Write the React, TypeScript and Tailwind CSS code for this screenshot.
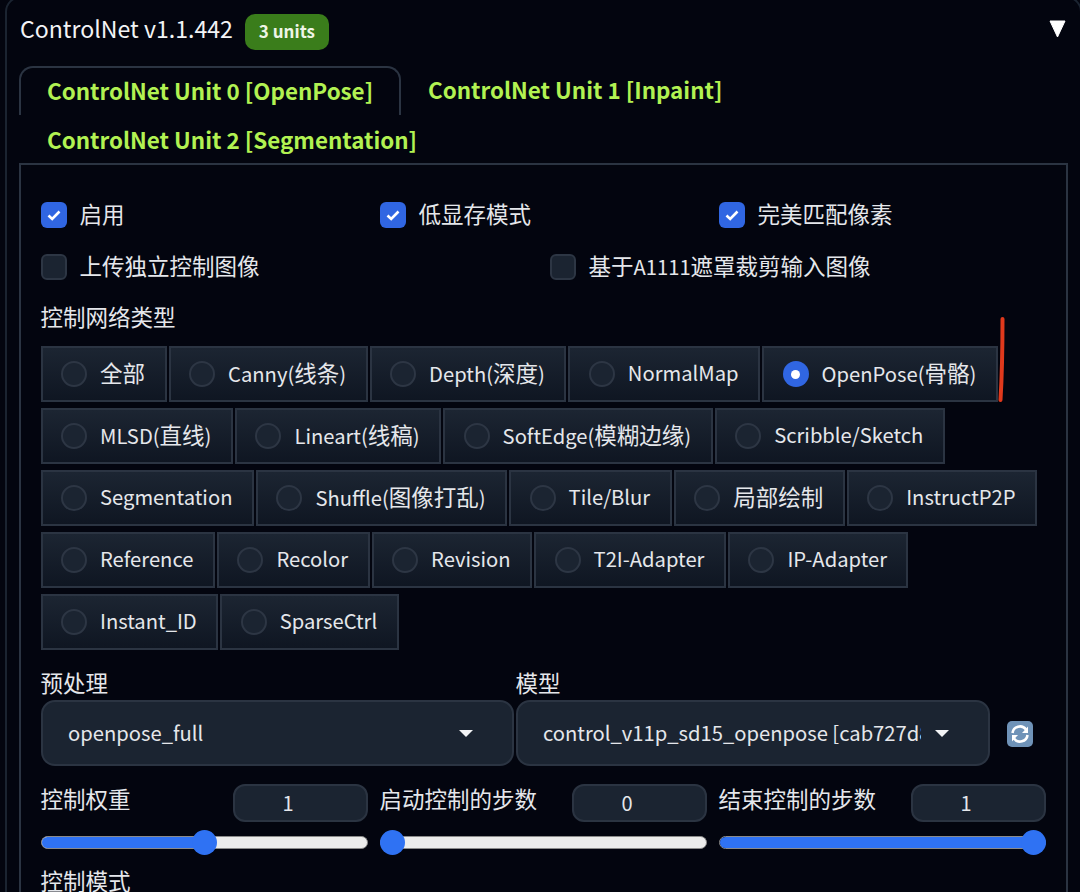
import React from 'react';

const FONT = "font-['Noto_Sans_CJK_SC','Noto_Sans',sans-serif]";

const modes = [
  '全部',
  'Canny(线条)',
  'Depth(深度)',
  'NormalMap',
  'OpenPose(骨骼)',
  'MLSD(直线)',
  'Lineart(线稿)',
  'SoftEdge(模糊边缘)',
  'Scribble/Sketch',
  'Segmentation',
  'Shuffle(图像打乱)',
  'Tile/Blur',
  '局部绘制',
  'InstructP2P',
  'Reference',
  'Recolor',
  'Revision',
  'T2I-Adapter',
  'IP-Adapter',
  'Instant_ID',
  'SparseCtrl',
];

// Latin runs sit a little smaller than the CJK ones in the original UI font
const Mixed: React.FC<{ text: string }> = ({ text }) => (
  <>
    {text.split(/([\u4e00-\u9fff]+)/).map((run, i) =>
      run === '' ? null : (
        <span key={i} className={/[\u4e00-\u9fff]/.test(run) ? 'text-[22.5px]' : 'text-[20.2px]'}>
          {run}
        </span>
      ),
    )}
  </>
);

const Checkbox: React.FC<{ label: string; checked?: boolean }> = ({ label, checked }) => (
  <label className="flex items-center gap-[13px] h-[26px]">
    {checked ? (
      <span className="w-[26px] h-[26px] rounded-[6px] bg-[#3066e2] flex items-center justify-center">
        <svg width="16" height="16" viewBox="0 0 16 16" fill="none">
          <path d="M2.5 8.5L6.2 12L13.5 4.5" stroke="white" strokeWidth="2.6" />
        </svg>
      </span>
    ) : (
      <span className="w-[26px] h-[26px] rounded-[6px] bg-[#1b2431] border-2 border-[#2d3644]" />
    )}
    <span className="leading-[26px] pb-[1px] text-[#e5e7eb] whitespace-nowrap">
      <Mixed text={label} />
    </span>
  </label>
);

const RadioItem: React.FC<{ label: string; checked?: boolean }> = ({ label, checked }) => (
  <label className="flex items-center gap-[13px] h-[56px] pl-[18.5px] pr-[19.5px] border-2 border-[#2b3442] bg-gradient-to-b from-[#1c2532] to-[#0f1622]">
    {checked ? (
      <span className="w-[26px] h-[26px] rounded-full bg-[#3066e2] flex items-center justify-center">
        <span className="w-[9px] h-[9px] rounded-full bg-white" />
      </span>
    ) : (
      <span className="w-[26px] h-[26px] rounded-full bg-[#1b2431] border-2 border-[#2d3644]" />
    )}
    <span className="leading-[26px] pb-[1px] text-[#e5e7eb] whitespace-nowrap">
      <Mixed text={label} />
    </span>
  </label>
);

const Caret = () => (
  <svg width="14" height="7" viewBox="0 0 14 7" className="shrink-0">
    <path d="M0 0H14L7 7Z" fill="#f3f4f6" />
  </svg>
);

const Slider: React.FC<{ label: string; value: string; percent: number }> = ({ label, value, percent }) => (
  <div className="w-[327px]">
    <div className="flex justify-between items-start h-[38px]">
      <span className="text-[22.5px] leading-[28px] text-[#e5e7eb] whitespace-nowrap">{label}</span>
      <div className="w-[135px] h-[38px] rounded-[12px] bg-[#1b2431] border-2 border-[#2b3442] flex items-center justify-center pr-[24px] text-[20px] text-[#e5e7eb]">
        {value}
      </div>
    </div>
    <div className="relative h-[25px] mt-[8px] flex items-center">
      <div className="w-full h-[13px] rounded-full bg-[#ececec] border border-[#8b8b8b] overflow-hidden">
        <div className="h-full bg-[#2f72f3]" style={{ width: `${percent}%` }} />
      </div>
      <span
        className="absolute top-0 w-[25px] h-[25px] rounded-full bg-[#2f72f3]"
        style={{ left: `calc(${percent}% - ${(percent / 100) * 25}px)` }}
      />
    </div>
  </div>
);

const App: React.FC = () => {
  return (
    <div className={`relative w-[1080px] h-[892px] overflow-hidden bg-[#03050f] ${FONT}`}>
      <div className="ml-[5px] w-[1077px] h-[920px] -mt-[4px] border-2 border-[#1b2431] rounded-t-[16px] pl-[12px] pt-[16px]">
        {/* Header */}
        <div className="flex items-center justify-between w-[1047px] h-[36px] pl-px">
          <div className="flex items-center gap-[12px]">
            <span className="text-[23.1px] leading-[30px] pb-[8px] text-[#f3f4f6]">ControlNet v1.1.442</span>
            <span className="h-[36px] px-[14px] rounded-[10px] bg-[#3a7d1b] flex items-center pb-[2px] text-[17px] font-semibold text-[#eef5e6]">
              3 units
            </span>
          </div>
          <svg width="17" height="18" viewBox="0 0 17 18" className="mb-[6px]">
            <path d="M1 1H16L8.5 17Z" fill="white" stroke="white" strokeLinejoin="round" />
          </svg>
        </div>

        {/* Tabs */}
        <div className="w-[1049px] mt-[16px]">
          <div className="flex h-[49px]">
            <div className="w-[382px] border-2 border-b-0 border-[#2b3442] rounded-t-[14px] pl-[26px] text-[22.4px] leading-[44px] font-semibold text-[#b2f252] whitespace-nowrap">
              ControlNet Unit 0 [OpenPose]
            </div>
            <div className="pl-[27px] text-[22.4px] leading-[46px] font-semibold text-[#b2f252] whitespace-nowrap">
              ControlNet Unit 1 [Inpaint]
            </div>
          </div>
          <div className="h-[48px] pl-[28px] text-[22.4px] leading-[48px] font-semibold text-[#b2f252] whitespace-nowrap">
            ControlNet Unit 2 [Segmentation]
          </div>

          {/* Panel */}
          <div className="h-[760px] border-2 border-[#2b3442] pl-[19.5px] pr-[19px] pt-[37px]">
            <div className="grid grid-cols-[339px_339px_1fr]">
              <Checkbox label="启用" checked />
              <Checkbox label="低显存模式" checked />
              <Checkbox label="完美匹配像素" checked />
            </div>
            <div className="grid grid-cols-[509px_1fr] mt-[26px]">
              <Checkbox label="上传独立控制图像" />
              <Checkbox label="基于A1111遮罩裁剪输入图像" />
            </div>

            <div className="mt-[21px] text-[22.5px] leading-[30px] text-[#e5e7eb]">控制网络类型</div>
            <div className="flex flex-wrap gap-x-[2px] gap-y-[6px] mt-[15px]">
              {modes.map((mode) => (
                <RadioItem key={mode} label={mode} checked={mode === 'OpenPose(骨骼)'} />
              ))}
            </div>

            {/* Selects */}
            <div className="flex items-end mt-[17px]">
              <div className="w-[473px]">
                <div className="text-[22.5px] leading-[30px] text-[#e5e7eb]">预处理</div>
                <div className="h-[66px] rounded-[14px] bg-[#1b2431] border-2 border-[#2b3442] flex items-center justify-between pl-[25.5px] pr-[39px] text-[20.2px] text-[#e5e7eb] mt-[3px]">
                  <span>openpose_full</span>
                  <Caret />
                </div>
              </div>
              <div className="w-[474px] ml-[2px]">
                <div className="text-[22.5px] leading-[30px] text-[#e5e7eb]">模型</div>
                <div className="h-[66px] rounded-[14px] bg-[#1b2431] border-2 border-[#2b3442] flex items-center justify-between pl-[25.5px] pr-[39px] text-[20.2px] text-[#e5e7eb] mt-[3px]">
                  <span className="w-[378px] overflow-hidden whitespace-nowrap">control_v11p_sd15_openpose [cab727d8]</span>
                  <Caret />
                </div>
              </div>
              <svg width="26" height="26" viewBox="0 0 26 26" className="ml-[17px] mb-[19px]">
                <rect width="26" height="26" rx="5" fill="#6f93b8" />
                <path d="M5.5 12A7.5 7.5 0 0 1 19 8.5" stroke="white" strokeWidth="2.6" fill="none" />
                <path d="M21 5.5V12H15Z" fill="white" />
                <path d="M20.5 14A7.5 7.5 0 0 1 7 17.5" stroke="white" strokeWidth="2.6" fill="none" />
                <path d="M5 20.5V14H11Z" fill="white" />
              </svg>
            </div>

            {/* Sliders */}
            <div className="flex gap-[12px] mt-[18px]">
              <Slider label="控制权重" value="1" percent={50} />
              <Slider label="启动控制的步数" value="0" percent={0} />
              <Slider label="结束控制的步数" value="1" percent={100} />
            </div>

            <div className="mt-[10px] text-[22.5px] leading-[30px] text-[#e5e7eb]">控制模式</div>
          </div>
        </div>
      </div>

      {/* Red annotation line */}
      <svg width="8" height="90" viewBox="0 0 8 90" className="absolute left-[997px] top-[315px]">
        <path d="M5.5 4C5.5 30 5 60 3.5 85" stroke="#e0391c" strokeWidth="4" strokeLinecap="round" fill="none" />
      </svg>
    </div>
  );
};

export default App;
